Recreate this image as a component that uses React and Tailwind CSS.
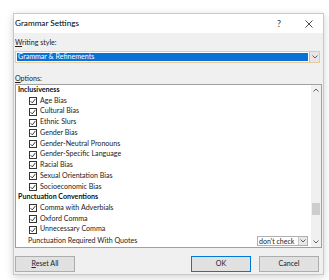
import React from "react";

const Check = () => (
  <span className="w-[8px] h-[8px] border border-[#333] bg-white flex items-center justify-center shrink-0">
    <svg width="6" height="6" viewBox="0 0 6 6">
      <polyline points="0.6,3.2 2.3,4.9 5.4,0.9" fill="none" stroke="#222" strokeWidth="0.9" />
    </svg>
  </span>
);

const Chevron = ({ up }) => (
  <svg width="6" height="4" viewBox="0 0 6 4">
    <polyline
      points={up ? "0.5,3.5 3,1 5.5,3.5" : "0.5,0.5 3,3 5.5,0.5"}
      fill="none"
      stroke="#606060"
      strokeWidth="1"
    />
  </svg>
);

const Header = ({ children }) => (
  <div className="h-[10.8px] flex items-center pl-[2px] font-bold text-[#111]">{children}</div>
);

const Item = ({ children }) => (
  <div className="h-[10.8px] flex items-center pl-[13px] gap-[3px]">
    <Check />
    <span>{children}</span>
  </div>
);

export default function App() {
  return (
    <div className="w-[329px] h-[280px] bg-white pl-[13px] pt-[13px] font-['Lato',sans-serif] text-[7.1px] text-[#222]">
      <div className="w-[311px] h-[262px] bg-[#f0f0f0] border border-[#c8c8c8] shadow-[0_2px_8px_rgba(0,0,0,0.18)] flex flex-col">
        {/* title bar */}
        <div className="h-[19px] bg-white flex items-center pl-[1px] pr-[10px] shrink-0">
          <span className="text-[8.2px] text-black">Grammar Settings</span>
          <span className="ml-auto text-[9px] text-[#333] mr-[24px]">?</span>
          <svg width="8" height="8" viewBox="0 0 8 8">
            <path d="M0.5 0.5 L7.5 7.5 M7.5 0.5 L0.5 7.5" stroke="#333" strokeWidth="0.9" />
          </svg>
        </div>
        {/* body */}
        <div className="flex flex-col px-[1px] pt-[5px] flex-1">
          <div className="h-[10px] flex items-center">
            <span><span className="underline">W</span>riting style:</span>
          </div>
          <div className="mt-[3px] h-[12px] w-[305px] border border-[#e8c9a0] bg-white flex items-stretch">
            <div className="flex-1 bg-[#0a72d6] text-white flex items-center pl-[1px] mx-[1px] my-[1px]">
              Grammar &amp; Refinements
            </div>
            <div className="w-[10px] bg-[#e6e6e6] border-l border-[#c0c0c0] flex items-center justify-center">
              <Chevron />
            </div>
          </div>
          <div className="mt-[11px] h-[10px] flex items-center">
            <span><span className="underline">O</span>ptions:</span>
          </div>
          <div className="w-[307px] h-[164px] border border-[#a0a0a0] bg-white flex overflow-hidden">
            <div className="flex-1 flex flex-col">
              <Header>Inclusiveness</Header>
              <Item>Age Bias</Item>
              <Item>Cultural Bias</Item>
              <Item>Ethnic Slurs</Item>
              <Item>Gender Bias</Item>
              <Item>Gender-Neutral Pronouns</Item>
              <Item>Gender-Specific Language</Item>
              <Item>Racial Bias</Item>
              <Item>Sexual Orientation Bias</Item>
              <Item>Socioeconomic Bias</Item>
              <Header>Punctuation Conventions</Header>
              <Item>Comma with Adverbials</Item>
              <Item>Oxford Comma</Item>
              <Item>Unnecessary Comma</Item>
              <div className="h-[12px] flex items-center pl-[12px] pr-[3px]">
                <span>Punctuation Required With Quotes</span>
                <div className="ml-auto w-[51px] h-[10px] border border-[#b0b0b0] flex items-stretch bg-white">
                  <span className="flex-1 flex items-center pl-[1px] text-[7px]">don't check</span>
                  <span className="w-[9px] bg-[#e8e8e8] border-l border-[#c8c8c8] flex items-center justify-center">
                    <Chevron />
                  </span>
                </div>
              </div>
            </div>
            <div className="w-[10px] bg-[#f0f0f0] flex flex-col items-center">
              <div className="h-[10px] flex items-center justify-center">
                <Chevron up />
              </div>
              <div className="flex-1 w-full flex flex-col justify-end px-[1px] pb-[22px]">
                <div className="h-[12px] bg-[#cdcdcd]" />
              </div>
              <div className="h-[10px] flex items-center justify-center">
                <Chevron />
              </div>
            </div>
          </div>
          <div className="mt-[8px] flex items-center">
            <div className="w-[60px] h-[16px] bg-[#e1e1e1] border border-[#adadad] flex items-center justify-center">
              <span><span className="underline">R</span>eset All</span>
            </div>
            <div className="ml-auto w-[60px] h-[16px] bg-[#e1e1e1] border border-[#0078d7] flex items-center justify-center">
              OK
            </div>
            <div className="ml-[8px] mr-[3px] w-[60px] h-[16px] bg-[#e1e1e1] border border-[#adadad] flex items-center justify-center">
              Cancel
            </div>
          </div>
        </div>
      </div>
    </div>
  );
}
